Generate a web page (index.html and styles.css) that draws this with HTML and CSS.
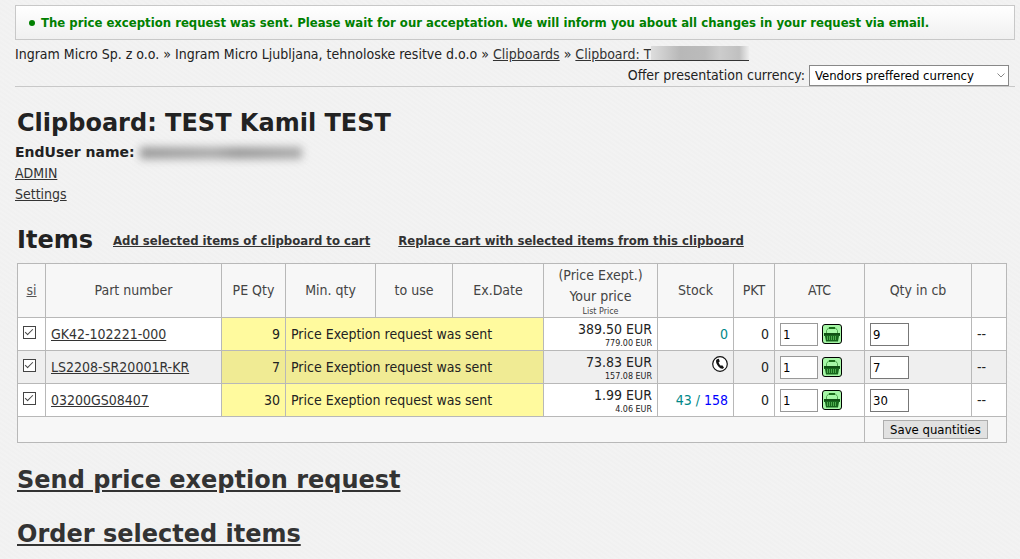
FILE: index.html
```
<!DOCTYPE html>
<html lang="en">
<head>
  <meta charset="UTF-8">
  <title>Clipboard: TEST Kamil TEST</title>
  <link rel="stylesheet" href="styles.css">
</head>
<body>

  <svg class="sprite" aria-hidden="true">
    <symbol id="basket" viewBox="0 0 20 20">
      <rect x="0.5" y="0.5" width="19" height="19" rx="2.5" fill="#a6f7a6" stroke="#000"/>
      <path d="M4.5 9V6.5L6.5 4H13.5L15.5 6.5V9" fill="none" stroke="#4fa64f"/>
      <path d="M7 4H13" stroke="#1b6e1b" stroke-width="2"/>
      <path d="M2 9H18V12H17L16 17.5H4L3 12H2Z" fill="#17661c"/>
      <path d="M2 10H18" stroke="#0a3d0d"/>
      <path d="M5.5 12V16M7.5 12V16M9.5 12V16M11.5 12V16M13.5 12V16" stroke="#5cc05c" stroke-width="0.8"/>
    </symbol>
    <symbol id="phone" viewBox="0 0 16 16">
      <circle cx="8" cy="8" r="7.3" fill="#fff" stroke="#111" stroke-width="1.2"/>
      <path d="M5 3.2L6.8 2.8L7.8 5.4L6.6 6.3Q7 8.3 8.8 9.8L10.2 9.3L12 11.4L10.8 12.8Q8.6 13.2 6.4 10.6Q3.6 7 4.1 4.3Z" fill="#111"/>
    </symbol>
  </svg>

  <ul class="message">
    <li>The price exception request was sent. Please wait for our acceptation. We will inform you about all changes in your request via email.</li>
  </ul>

  <div class="top">
    <div class="path">
      Ingram Micro Sp. z o.o. » Ingram Micro Ljubljana, tehnoloske resitve d.o.o » <a href="#">Clipboards</a> » <a href="#">Clipboard: T<span class="hidden-name"></span></a>
    </div>
    <div class="currency">
      <label for="currency">Offer presentation currency:</label>
      <span class="select">
        <select id="currency">
          <option>Vendors preffered currency</option>
        </select>
        <svg viewBox="0 0 8 5"><path d="M0.5 0.5L4 4L7.5 0.5" fill="none" stroke="#888"/></svg>
      </span>
    </div>
  </div>

  <h1>Clipboard: TEST Kamil TEST</h1>
  <div class="enduser">EndUser name: <span class="hidden-user"></span></div>
  <ul class="links">
    <li><a href="#">ADMIN</a></li>
    <li><a href="#">Settings</a></li>
  </ul>

  <div class="items-head">
    <h2>Items</h2>
    <a href="#">Add selected items of clipboard to cart</a>
    <a href="#">Replace cart with selected items from this clipboard</a>
  </div>

  <form onsubmit="return false">
    <table class="items">
      <colgroup>
        <col class="c-si"><col><col class="c-pe"><col class="c-min"><col class="c-use"><col class="c-date">
        <col class="c-price"><col class="c-stock"><col class="c-pkt"><col class="c-atc"><col class="c-qty"><col class="c-last">
      </colgroup>
      <thead>
        <tr>
          <th><a href="#">si</a></th>
          <th>Part number</th>
          <th>PE Qty</th>
          <th>Min. qty</th>
          <th>to use</th>
          <th>Ex.Date</th>
          <th>(Price Exept.)<br>Your price<small>List Price</small></th>
          <th>Stock</th>
          <th>PKT</th>
          <th>ATC</th>
          <th>Qty in cb</th>
          <th></th>
        </tr>
      </thead>
      <tbody>
        <tr>
          <td class="check"><input type="checkbox" aria-label="GK42-102221-000" checked></td>
          <td><a href="#">GK42-102221-000</a></td>
          <td class="num sent">9</td>
          <td class="sent" colspan="3">Price Exeption request was sent</td>
          <td class="price">389.50 EUR<small>779.00 EUR</small></td>
          <td class="num stock">0</td>
          <td class="num">0</td>
          <td><div class="atc"><input type="text" value="1" aria-label="Add to cart"><button class="basket" aria-label="Add to cart"><svg><use href="#basket"/></svg></button></div></td>
          <td><input type="text" value="9" aria-label="Qty in clipboard"></td>
          <td>--</td>
        </tr>
        <tr class="even">
          <td class="check"><input type="checkbox" aria-label="LS2208-SR20001R-KR" checked></td>
          <td><a href="#">LS2208-SR20001R-KR</a></td>
          <td class="num sent">7</td>
          <td class="sent" colspan="3">Price Exeption request was sent</td>
          <td class="price">73.83 EUR<small>157.08 EUR</small></td>
          <td class="num"><svg class="phone"><use href="#phone"/></svg></td>
          <td class="num">0</td>
          <td><div class="atc"><input type="text" value="1" aria-label="Add to cart"><button class="basket" aria-label="Add to cart"><svg><use href="#basket"/></svg></button></div></td>
          <td><input type="text" value="7" aria-label="Qty in clipboard"></td>
          <td>--</td>
        </tr>
        <tr>
          <td class="check"><input type="checkbox" aria-label="03200GS08407" checked></td>
          <td><a href="#">03200GS08407</a></td>
          <td class="num sent">30</td>
          <td class="sent" colspan="3">Price Exeption request was sent</td>
          <td class="price">1.99 EUR<small>4.06 EUR</small></td>
          <td class="num stock">43 / <span class="remote">158</span></td>
          <td class="num">0</td>
          <td><div class="atc"><input type="text" value="1" aria-label="Add to cart"><button class="basket" aria-label="Add to cart"><svg><use href="#basket"/></svg></button></div></td>
          <td><input type="text" value="30" aria-label="Qty in clipboard"></td>
          <td>--</td>
        </tr>
      </tbody>
      <tfoot>
        <tr>
          <td colspan="10"></td>
          <td class="save" colspan="2"><button>Save quantities</button></td>
        </tr>
      </tfoot>
    </table>
  </form>

  <h2 class="action"><a href="#">Send price exeption request</a></h2>
  <h2 class="action"><a href="#">Order selected items</a></h2>

</body>
</html>
```
FILE: styles.css
```
body {
  margin: 5px 5px 0 15px;
  background: #f1f1f1 repeating-linear-gradient(35deg, #f3f3f3 0, #f0f0f0 2px, #f3f3f3 4px);
  color: #222;
  font-family: "DejaVu Sans Condensed", "DejaVu Sans", Tahoma, sans-serif;
  font-size: 14px;
  line-height: 21px;
}

a {
  color: #333;
}

ul {
  margin: 0;
  padding: 0;
  list-style: none;
}

h1, h2 {
  margin: 0;
  font-family: "DejaVu Sans", Verdana, sans-serif;
  font-size: 24px;
  line-height: 32px;
}

.sprite {
  display: none;
}

.message {
  padding: 6px 13px;
  border: 1px solid #c8c8c8;
  background: linear-gradient(#fff, #f0f0f0);
  color: #008000;
  font-size: 13px;
  font-weight: bold;
}

.message li::before {
  content: "";
  display: inline-block;
  width: 6px;
  height: 6px;
  margin-right: 6px;
  border-radius: 50%;
  background: #008000;
  vertical-align: 1px;
}

.top {
  padding-top: 4px;
  border-bottom: 1px solid #c8c8c8;
}

.hidden-name {
  display: inline-block;
  width: 98px;
  height: 14px;
  border-bottom: 1px solid #333;
  vertical-align: -2px;
  background: linear-gradient(90deg, #ddd, #b8b8b8 30%, #bbb 55%, #ccc 70%, #c0c0c0 90%, #eee);
}

.currency {
  display: flex;
  justify-content: flex-end;
  align-items: center;
  gap: 4px;
  padding-right: 6px;
}

.select {
  position: relative;
}

.select svg {
  position: absolute;
  right: 4px;
  top: 8px;
  width: 8px;
  height: 5px;
}

select {
  display: block;
  appearance: none;
  width: 200px;
  height: 21px;
  padding: 0 5px;
  border: 1px solid #888;
  border-radius: 0;
  background: #fff;
  color: #000;
  font: 13px "DejaVu Sans Condensed", "DejaVu Sans", sans-serif;
}

h1 {
  margin: 20px 2px 3px;
}

.enduser {
  font-family: "DejaVu Sans", Verdana, sans-serif;
  font-weight: bold;
}

.hidden-user {
  display: inline-block;
  width: 162px;
  height: 12px;
  vertical-align: middle;
  background: linear-gradient(90deg, #999, #aaa 45%, #999 60%, #aaa);
  filter: blur(4px);
}

.items-head {
  display: flex;
  align-items: center;
  margin: 19px 2px 7px;
}

.items-head a {
  margin-left: 20px;
  font-size: 13px;
  font-weight: bold;
}

.items-head a + a {
  margin-left: 28px;
}

form {
  margin: 0 8px 0 2px;
}

.items {
  width: 100%;
  border-collapse: collapse;
  table-layout: fixed;
  background: #f7f7f7;
}

.c-si { width: 28px; }
.c-pe { width: 64px; }
.c-min { width: 90px; }
.c-use { width: 77px; }
.c-date { width: 91px; }
.c-price { width: 114px; }
.c-stock { width: 76px; }
.c-pkt { width: 41px; }
.c-atc { width: 90px; }
.c-qty { width: 107px; }
.c-last { width: 35px; }

.items th,
.items td {
  height: 32px;
  padding: 0 5px;
  border: 1px solid #b8b8b8;
}

.items th {
  height: 53px;
  color: #444;
  font-weight: normal;
}

.items th a {
  color: #555;
}

.items tbody tr {
  background: #fff;
}

.items tbody .even {
  background: #efefef;
}

.items .sent {
  background: #fffa9e;
}

.items .even .sent {
  background: #f0eb94;
}

.items small {
  display: block;
  font-family: "DejaVu Sans", Verdana, sans-serif;
  font-size: 8px;
  line-height: 9px;
}

.items .num,
.items .price {
  text-align: right;
}

.items .price {
  line-height: 19px;
}

.items .stock {
  color: #088;
}

.items .remote {
  color: #00f;
}

.items .check {
  padding: 0 0 4px 5px;
  height: 28px;
}

.check input {
  display: block;
  appearance: none;
  width: 13px;
  height: 13px;
  margin: 0;
  border: 1px solid #444;
  background: #fff;
}

.check input:checked::before {
  content: "";
  display: block;
  width: 7px;
  height: 3px;
  margin: 2px 1px;
  border: solid #444;
  border-width: 0 0 1px 1px;
  transform: rotate(-45deg);
}

.items input[type="text"] {
  display: block;
  box-sizing: border-box;
  width: 39px;
  height: 23px;
  padding: 0 2px;
  border: 1px solid #777;
  background: #fff;
  color: #000;
  font: 13px "DejaVu Sans Condensed", "DejaVu Sans", sans-serif;
}

.atc {
  display: flex;
  align-items: center;
  gap: 4px;
}

.items .atc input {
  width: 38px;
  border-color: #999;
}

.basket {
  padding: 0;
  border: 0;
  background: none;
}

.basket svg {
  display: block;
  width: 20px;
  height: 20px;
}

.phone {
  display: inline-block;
  width: 16px;
  height: 16px;
}

.items tfoot td {
  height: 25px;
}

.save button {
  display: block;
  height: 19px;
  margin: 0 auto;
  padding: 0 6px;
  border: 1px solid #adadad;
  background: #e1e1e1;
  color: #000;
  font: 13px "DejaVu Sans Condensed", "DejaVu Sans", sans-serif;
}

.action {
  margin: 21px 2px 22px;
}
```
